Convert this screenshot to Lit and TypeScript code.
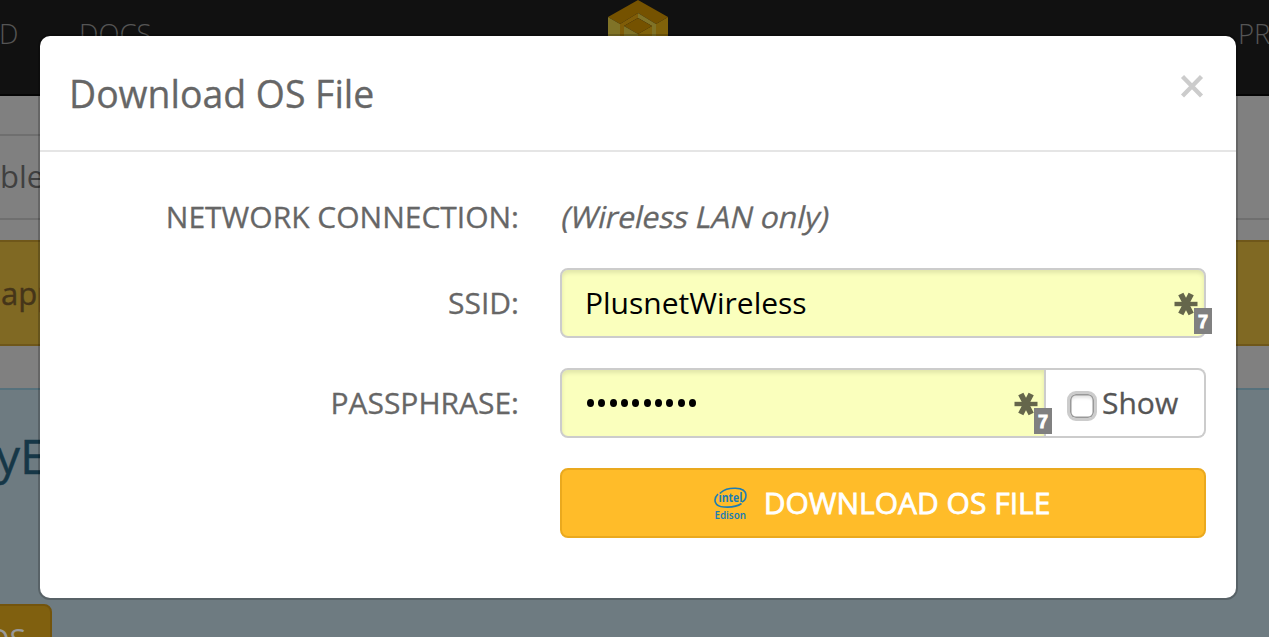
import { LitElement, html, css } from "lit";
import { customElement, property } from "lit/decorators.js";

@customElement("key-badge")
class KeyBadge extends LitElement {
  static styles = css`
    :host { position: absolute; right: -8px; bottom: 2px; width: 38px; height: 44px; }
    svg { display: block; }
    .star { stroke: #65664b; filter: blur(0.5px); }
    .num { font: bold 18px "Liberation Sans", Arial, sans-serif; fill: #fff; stroke: #fff; stroke-width: 0.9px; }
  `;
  render() {
    return html`<svg width="38" height="44" viewBox="0 0 38 44">
      <g class="star">
        <path stroke-width="4.400" d="M0.500 14H23.500" />
        <path stroke-width="5.800" d="M6.800 4L17.200 24M17.200 4L6.800 24" />
      </g>
      <rect x="20" y="18" width="18" height="26" fill="#808080" />
      <text class="num" x="24" y="38">7</text>
    </svg>`;
  }
}

@customElement("page-backdrop")
class PageBackdrop extends LitElement {
  static styles = css`
    :host { display: flex; flex-direction: column; height: 637px; background: #808080; overflow: hidden; }
    .nav { box-sizing: border-box; flex: none; height: 96px; display: flex; background: #111; border-bottom: 2px solid #050505; font-size: 27.5px; font-weight: 300; line-height: 36px; padding-top: 16px; color: #555; overflow: hidden; white-space: nowrap; }
    .nav > * { flex: none; }
    .nav .cut { width: 79px; text-indent: -1px; }
    .nav .docs { width: 529px; }
    .nav .logo { width: 60px; margin-top: -16px; margin-right: 570px; }
    .crumbs { box-sizing: border-box; flex: none; height: 86px; margin-top: 38px; border-bottom: 2px solid #6f6f6f; font-size: 31px; line-height: 81px; color: #404040; }
    .crumbs span { display: block; width: 600px; height: 82px; border-top: 2px solid #6f6f6f; }
    .notice { box-sizing: border-box; flex: none; height: 106px; margin-top: 20px; border: solid #6f571a; border-width: 2px 0; background: #806923; font-size: 31px; line-height: 102px; padding-left: 1px; color: #453519; -webkit-text-stroke: 0.4px #453519; }
    .device { flex: 1; margin-top: 42px; border-top: 2px solid #56717c; background: #6e7b81; color: #163747; }
    .name { font-size: 48px; line-height: 66px; height: 181px; padding-top: 33px; text-indent: -4px; -webkit-text-stroke: 0.4px #163747; }
    .action { box-sizing: border-box; width: 92px; height: 70px; margin-left: -40px; border: 2px solid #73540c; border-radius: 8px; background: #80600f; color: #999; font-size: 30px; line-height: 66px; text-align: right; padding-right: 24px; }
  `;
  render() {
    return html`
      <div class="nav">
        <span class="cut">D</span><span class="docs">DOCS</span>
        <svg class="logo" width="60" height="66" viewBox="0 0 60 66">
          <path fill="#755200" d="M30 0L60 17L48 24L30 13L12 24L0 17Z" />
          <path fill="#807327" d="M0 17L12 24V60H0Z" />
          <path fill="#80620a" d="M60 17L48 24V60H60Z" />
          <path fill="#805d08" d="M12 24L30 13V18L16 26V60H12Z" />
          <path fill="#807327" d="M30 13L48 24V60H44V26L30 18Z" />
          <path fill="#755200" d="M30 18L44 26L30 34L16 26Z" />
          <path fill="#807327" d="M16 26L30 34V60H16Z" />
          <path fill="#80620a" d="M44 26L30 34V60H44Z" />
        </svg>
        <span>PR</span>
      </div>
      <div class="crumbs"><span>ble</span></div>
      <div class="notice">app</div>
      <div class="device">
        <div class="name">yE</div>
        <div class="action">OS</div>
      </div>`;
  }
}

@customElement("os-dialog")
class OsDialog extends LitElement {
  @property() ssid = "PlusnetWireless";
  static styles = css`
    :host { display: block; box-sizing: border-box; width: 1196px; height: 562px; background: #fff; border-radius: 10px; box-shadow: 0 0 0 2px rgba(0, 0, 0, 0.2); color: #666; font-size: 30px; }
    .head { box-sizing: border-box; height: 116px; padding: 0 32px 0 29px; border-bottom: 2px solid #e5e5e5; display: flex; justify-content: space-between; }
    h1 { margin: 0; font-weight: 400; font-size: 37.4px; line-height: 116px; -webkit-text-stroke: 0.3px #666; }
    .close { margin-top: 39px; }
    .form { display: grid; grid-template-columns: 479px 646px; column-gap: 41px; grid-template-rows: 56px 70px 70px 70px; row-gap: 30px; padding-top: 30px; line-height: 70px; }
    .label { text-align: right; white-space: nowrap; -webkit-text-stroke: 0.3px #666; }
    .kind { justify-self: start; height: 70px; transform: skewX(-13deg); transform-origin: 0 46px; -webkit-text-stroke: 0.3px #666; }
    .group { display: flex; }
    .field { box-sizing: border-box; position: relative; flex: 1; height: 70px; border: 2px solid #ccc; border-radius: 8px; background: #faffbd; box-shadow: inset 0 3px 4px rgba(0, 0, 0, 0.1); color: #000; padding-left: 23px; line-height: 66px; }
    .secret { border-radius: 8px 0 0 8px; display: flex; align-items: center; gap: 4.33px; flex: none; width: 486px; padding-left: 25px; }
    .dot { width: 7px; height: 8px; border-radius: 50%; background: #000; }
    .show { box-sizing: border-box; width: 160px; height: 70px; border: 2px solid #ccc; border-left: 0; border-radius: 0 8px 8px 0; display: flex; align-items: center; padding-left: 21px; gap: 5px; color: #555; line-height: 66px; -webkit-text-stroke: 0.3px #555; }
    .box { box-sizing: border-box; width: 30px; height: 30px; margin-top: 6px; border: 3px solid #ccc; border-radius: 9px; box-shadow: inset 0 0 0 1.5px #999, inset 0 4px 3px #e5e5e5; }
    .download { box-sizing: border-box; height: 70px; border: 2px solid #eaa91e; border-radius: 8px; background: #ffbc29; color: #fff; display: flex; align-items: center; justify-content: center; gap: 16px; padding-right: 2px; line-height: 66px; -webkit-text-stroke: 0.8px #fff; }
    .mark { margin-top: 2px; }
    .intel { font: bold 13px "Open Sans", sans-serif; fill: #1c7cb5; -webkit-text-stroke: 0; }
    .edison { font: 600 11.5px "Noto Sans", sans-serif; fill: #1c7cb5; -webkit-text-stroke: 0; }
  `;
  render() {
    return html`
      <div class="head">
        <h1>Download OS File</h1>
        <svg class="close" width="24" height="24" viewBox="0 0 24 24"><path d="M2.500 1.500L21.500 21M21.500 1.500L2.500 21" stroke="#ccc" stroke-width="4.300" /></svg>
      </div>
      <div class="form">
        <div class="label">NETWORK CONNECTION:</div>
        <div class="kind">(Wireless LAN only)</div>
        <div class="label">SSID:</div>
        <div class="field">${this.ssid}<key-badge></key-badge></div>
        <div class="label">PASSPHRASE:</div>
        <div class="group">
          <div class="field secret">${Array.from({ length: 10 }, () => html`<i class="dot"></i>`)}<key-badge></key-badge></div>
          <div class="show"><span class="box"></span>Show</div>
        </div>
        <div></div>
        <div class="download">
          <svg class="mark" width="34" height="36" viewBox="0 0 34 36">
            <path d="M7 6.500C13 1 31.500 0 32 9C32 12 30.500 15 28 16M4 8C-1 13 0 20.500 10 21C17 21.500 24 20 27.500 17.500" fill="none" stroke="#1c7cb5" stroke-width="1.600" />
            <text class="intel" x="4.500" y="15.500" textLength="24" lengthAdjust="spacingAndGlyphs">intel</text>
            <text class="edison" x="0.500" y="33" textLength="31.500" lengthAdjust="spacingAndGlyphs">Edison</text>
          </svg>
          <span>DOWNLOAD OS FILE</span>
        </div>
      </div>`;
  }
}

@customElement("app-root")
class AppRoot extends LitElement {
  static styles = css`
    :host { display: block; position: relative; height: 637px; overflow: hidden; font-family: "Open Sans", sans-serif; }
    os-dialog { position: absolute; left: 40px; top: 36px; }
  `;
  render() {
    return html`<page-backdrop></page-backdrop><os-dialog></os-dialog>`;
  }
}
